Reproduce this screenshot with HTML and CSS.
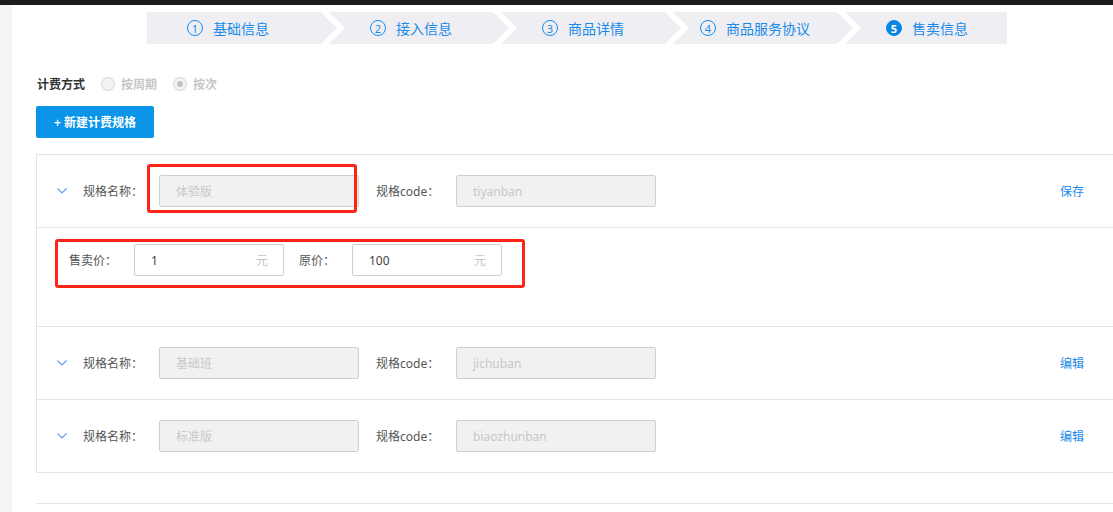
FILE: index.html
```html
<!DOCTYPE html>
<html lang="zh-CN">

<head>
  <meta charset="UTF-8" />
  <meta name="viewport" content="width=device-width, initial-scale=1.0" />
  <title>售卖信息</title>
  <link rel="stylesheet" href="styles.css">
</head>

<body>
  <div class="topbar"></div>
  <div class="layout">
    <aside class="side"></aside>
    <main class="main">

      <div class="steps">
        <div class="step step-first"><span class="num">1</span>基础信息</div>
        <div class="step"><span class="num">2</span>接入信息</div>
        <div class="step"><span class="num">3</span>商品详情</div>
        <div class="step"><span class="num">4</span>商品服务协议</div>
        <div class="step step-last"><span class="num num-active">5</span>售卖信息</div>
      </div>

      <div class="billing">
        <span class="billing-title">计费方式</span>
        <label class="radio"><span class="radio-dot"></span>按周期</label>
        <label class="radio"><span class="radio-dot checked"></span>按次</label>
      </div>

      <button class="btn-add">+ 新建计费规格</button>

      <div class="spec-table">
        <div class="spec-row">
          <span class="arrow"><svg width="10" height="6" viewBox="0 0 10 6"><polyline points="0.5,0.5 5,5 9.5,0.5" fill="none" stroke="#5d9eee" stroke-width="1.1" /></svg></span>
          <span class="lbl">规格名称：</span>
          <div class="field disabled">体验版</div>
          <span class="lbl lbl-code">规格code：</span>
          <div class="field disabled">tiyanban</div>
          <a class="action">保存</a>
          <div class="mark mark-name"></div>
        </div>

        <div class="spec-detail">
          <span class="lbl-price">售卖价：</span>
          <div class="field price"><span>1</span><span class="unit">元</span></div>
          <span class="lbl-price lbl-origin">原价：</span>
          <div class="field price"><span>100</span><span class="unit">元</span></div>
          <div class="mark mark-price"></div>
        </div>

        <div class="spec-row">
          <span class="arrow"><svg width="10" height="6" viewBox="0 0 10 6"><polyline points="0.5,0.5 5,5 9.5,0.5" fill="none" stroke="#5d9eee" stroke-width="1.1" /></svg></span>
          <span class="lbl">规格名称：</span>
          <div class="field disabled">基础班</div>
          <span class="lbl lbl-code">规格code：</span>
          <div class="field disabled">jichuban</div>
          <a class="action">编辑</a>
        </div>

        <div class="spec-row">
          <span class="arrow"><svg width="10" height="6" viewBox="0 0 10 6"><polyline points="0.5,0.5 5,5 9.5,0.5" fill="none" stroke="#5d9eee" stroke-width="1.1" /></svg></span>
          <span class="lbl">规格名称：</span>
          <div class="field disabled">标准版</div>
          <span class="lbl lbl-code">规格code：</span>
          <div class="field disabled">biaozhunban</div>
          <a class="action">编辑</a>
        </div>
      </div>

      <div class="divider"></div>
    </main>
  </div>
</body>

</html>
```

FILE: styles.css
```css
html,
body {
  margin: 0;
  overflow: hidden;
  background-color: #fff;
  font-family: "Noto Sans", "Noto Sans CJK SC", sans-serif;
  font-size: 12px;
  color: #333;
}

.topbar {
  height: 5px;
  background-color: #1b1b1b;
}

.layout {
  display: flex;
  min-height: 507px;
}

.side {
  width: 12px;
  flex-shrink: 0;
  background-color: #f4f4f6;
}

.main {
  flex: 1;
  padding-left: 24px;
  min-width: 0;
}

/* steps */
.steps {
  display: flex;
  margin: 7px 0 0 111px;
  height: 32px;
}

.step {
  width: 180px;
  height: 32px;
  margin-left: -8px;
  padding-right: 16px;
  box-sizing: border-box;
  display: flex;
  align-items: center;
  justify-content: center;
  background-color: #efeff3;
  color: #1a8ae8;
  font-size: 14px;
  clip-path: polygon(0 0, calc(100% - 16px) 0, 100% 50%, calc(100% - 16px) 100%, 0 100%, 16px 50%);
}

.step-first {
  width: 190px;
  margin-left: 0;
  padding-right: 28px;
  clip-path: polygon(0 0, calc(100% - 16px) 0, 100% 50%, calc(100% - 16px) 100%, 0 100%);
}

.step-last {
  width: 162px;
  padding-right: 0;
  padding-left: 2px;
  clip-path: polygon(0 0, 100% 0, 100% 100%, 0 100%, 16px 50%);
}

.num {
  width: 16px;
  height: 16px;
  box-sizing: border-box;
  border: 1px solid #1a8ae8;
  border-radius: 50%;
  margin-right: 10px;
  display: flex;
  align-items: center;
  justify-content: center;
  font-size: 11px;
  line-height: 1;
}

.num-active {
  background-color: #0a86e2;
  border-color: #0a86e2;
  color: #fff;
  font-weight: bold;
}

/* billing */
.billing {
  display: flex;
  align-items: center;
  margin-top: 33px;
  height: 14px;
}

.billing-title {
  font-weight: 600;
  color: #333;
  margin-left: 1px;
  margin-right: 16px;
}

.radio {
  display: flex;
  align-items: center;
  color: #c6c6c6;
  font-weight: 600;
  margin-right: 16px;
}

.radio-dot {
  width: 14px;
  height: 14px;
  box-sizing: border-box;
  border: 1px solid #d6d6d6;
  border-radius: 50%;
  background-color: #f3f3f3;
  margin-right: 6px;
  display: flex;
  align-items: center;
  justify-content: center;
}

.radio-dot.checked::after {
  content: "";
  width: 6px;
  height: 6px;
  border-radius: 50%;
  background-color: #c2c2c2;
}

.btn-add {
  display: block;
  margin-top: 15px;
  width: 118px;
  height: 32px;
  border: none;
  border-radius: 2px;
  background-color: #0a95e8;
  color: #fff;
  font-family: inherit;
  font-size: 12px;
  font-weight: 600;
  cursor: pointer;
}

/* spec table */
.spec-table {
  margin-top: 16px;
  width: 1120px;
  border: 1px solid #e4e4e4;
  border-right: none;
}

.spec-row {
  position: relative;
  height: 72px;
  display: flex;
  align-items: center;
  padding-right: 73px;
}

.spec-row+.spec-row,
.spec-detail+.spec-row,
.spec-detail {
  border-top: 1px solid #e4e4e4;
}

.arrow {
  display: flex;
  margin-left: 20px;
  width: 10px;
}

.lbl {
  margin-left: 16px;
  width: 76px;
  color: #555;
}

.lbl-code {
  margin-left: 17px;
  width: 80px;
}

.field {
  width: 200px;
  height: 32px;
  box-sizing: border-box;
  border: 1px solid #cfcfcf;
  border-radius: 2px;
  padding: 0 15px 0 16px;
  display: flex;
  align-items: center;
}

.field.disabled {
  background-color: #f1f1f1;
  color: #c8c8c8;
}

.action {
  margin-left: auto;
  color: #1a8ae8;
  cursor: pointer;
}

.spec-detail {
  position: relative;
  height: 99px;
  display: flex;
  align-items: flex-start;
  padding: 16px 0 0 32px;
  box-sizing: border-box;
}

.lbl-price {
  width: 65px;
  height: 32px;
  display: flex;
  align-items: center;
  color: #555;
}

.lbl-origin {
  margin-left: 15px;
  width: 53px;
}

.field.price {
  width: 150px;
  justify-content: space-between;
  color: #444;
}

.unit {
  color: #c4c4c4;
}

/* red highlight marks */
.mark {
  position: absolute;
  box-sizing: border-box;
  border: 3px solid #fd2418;
  border-radius: 3px;
  pointer-events: none;
}

.mark-name {
  left: 110px;
  top: 9px;
  width: 210px;
  height: 49px;
}

.mark-price {
  left: 18px;
  top: 11px;
  width: 470px;
  height: 49px;
}

.divider {
  margin-top: 30px;
  height: 1px;
  background-color: #e4e4e4;
}
```
